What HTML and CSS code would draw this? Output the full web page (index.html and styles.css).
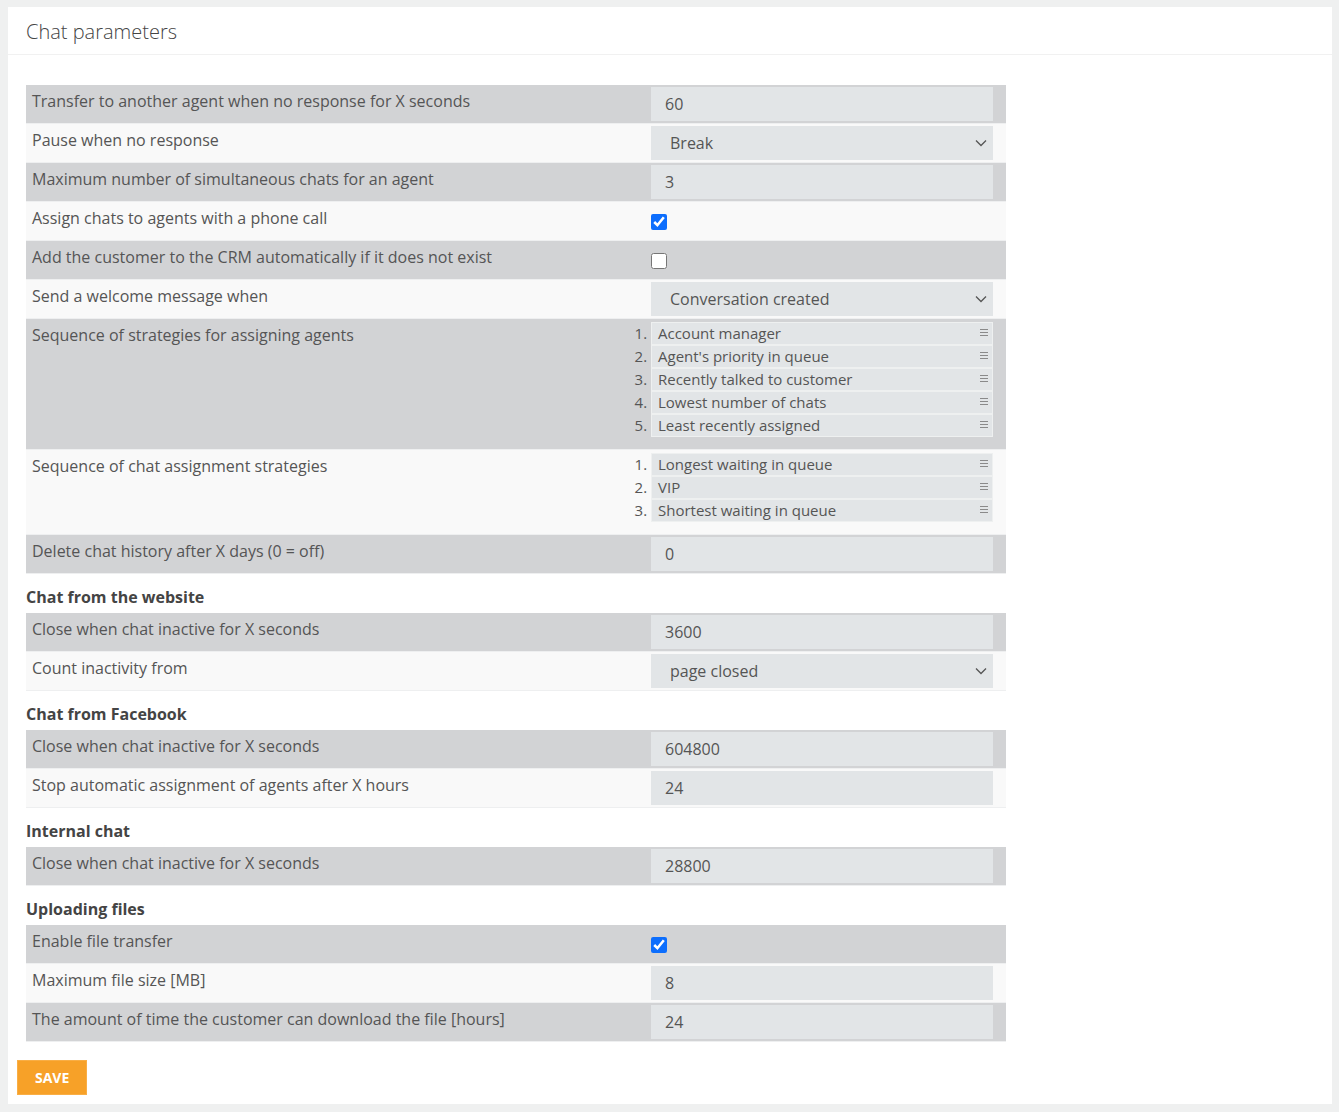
FILE: index.html
```html
<!DOCTYPE html>
<html lang="en">
<head>
    <meta charset="UTF-8">
    <meta name="viewport" content="width=device-width, initial-scale=1.0">
    <title>Chat parameters</title>
    <link rel="stylesheet" href="styles.css">
</head>
<body>
    <div class="panel">
        <div class="panel-header">Chat parameters</div>

        <div class="panel-body">
            <table class="params">
                <tr>
                    <td class="label">Transfer to another agent when no response for X seconds</td>
                    <td class="value"><input type="text" value="60"></td>
                </tr>
                <tr>
                    <td class="label">Pause when no response</td>
                    <td class="value">
                        <div class="select-wrap">
                            <select><option>Break</option></select>
                            <svg class="chevron" width="12" height="8" viewBox="0 0 12 8"><path d="M1 1.5l5 5 5-5" fill="none" stroke="#555" stroke-width="1.3"/></svg>
                        </div>
                    </td>
                </tr>
                <tr>
                    <td class="label">Maximum number of simultaneous chats for an agent</td>
                    <td class="value"><input type="text" value="3"></td>
                </tr>
                <tr>
                    <td class="label">Assign chats to agents with a phone call</td>
                    <td class="value"><input type="checkbox" checked></td>
                </tr>
                <tr>
                    <td class="label">Add the customer to the CRM automatically if it does not exist</td>
                    <td class="value"><input type="checkbox"></td>
                </tr>
                <tr>
                    <td class="label">Send a welcome message when</td>
                    <td class="value">
                        <div class="select-wrap">
                            <select><option>Conversation created</option></select>
                            <svg class="chevron" width="12" height="8" viewBox="0 0 12 8"><path d="M1 1.5l5 5 5-5" fill="none" stroke="#555" stroke-width="1.3"/></svg>
                        </div>
                    </td>
                </tr>
                <tr>
                    <td class="label">Sequence of strategies for assigning agents</td>
                    <td class="value">
                        <ol class="sortable">
                            <li>Account manager<svg class="handle" width="8" height="7" viewBox="0 0 8 7"><path d="M0 .5h8M0 3.5h8M0 6.5h8" stroke="#8a8a8a" stroke-width="1"/></svg></li>
                            <li>Agent's priority in queue<svg class="handle" width="8" height="7" viewBox="0 0 8 7"><path d="M0 .5h8M0 3.5h8M0 6.5h8" stroke="#8a8a8a" stroke-width="1"/></svg></li>
                            <li>Recently talked to customer<svg class="handle" width="8" height="7" viewBox="0 0 8 7"><path d="M0 .5h8M0 3.5h8M0 6.5h8" stroke="#8a8a8a" stroke-width="1"/></svg></li>
                            <li>Lowest number of chats<svg class="handle" width="8" height="7" viewBox="0 0 8 7"><path d="M0 .5h8M0 3.5h8M0 6.5h8" stroke="#8a8a8a" stroke-width="1"/></svg></li>
                            <li>Least recently assigned<svg class="handle" width="8" height="7" viewBox="0 0 8 7"><path d="M0 .5h8M0 3.5h8M0 6.5h8" stroke="#8a8a8a" stroke-width="1"/></svg></li>
                        </ol>
                    </td>
                </tr>
                <tr>
                    <td class="label">Sequence of chat assignment strategies</td>
                    <td class="value">
                        <ol class="sortable">
                            <li>Longest waiting in queue<svg class="handle" width="8" height="7" viewBox="0 0 8 7"><path d="M0 .5h8M0 3.5h8M0 6.5h8" stroke="#8a8a8a" stroke-width="1"/></svg></li>
                            <li>VIP<svg class="handle" width="8" height="7" viewBox="0 0 8 7"><path d="M0 .5h8M0 3.5h8M0 6.5h8" stroke="#8a8a8a" stroke-width="1"/></svg></li>
                            <li>Shortest waiting in queue<svg class="handle" width="8" height="7" viewBox="0 0 8 7"><path d="M0 .5h8M0 3.5h8M0 6.5h8" stroke="#8a8a8a" stroke-width="1"/></svg></li>
                        </ol>
                    </td>
                </tr>
                <tr>
                    <td class="label">Delete chat history after X days (0 = off)</td>
                    <td class="value"><input type="text" value="0"></td>
                </tr>
            </table>

            <h3>Chat from the website</h3>
            <table class="params">
                <tr>
                    <td class="label">Close when chat inactive for X seconds</td>
                    <td class="value"><input type="text" value="3600"></td>
                </tr>
                <tr>
                    <td class="label">Count inactivity from</td>
                    <td class="value">
                        <div class="select-wrap">
                            <select><option>page closed</option></select>
                            <svg class="chevron" width="12" height="8" viewBox="0 0 12 8"><path d="M1 1.5l5 5 5-5" fill="none" stroke="#555" stroke-width="1.3"/></svg>
                        </div>
                    </td>
                </tr>
            </table>

            <h3>Chat from Facebook</h3>
            <table class="params">
                <tr>
                    <td class="label">Close when chat inactive for X seconds</td>
                    <td class="value"><input type="text" value="604800"></td>
                </tr>
                <tr>
                    <td class="label">Stop automatic assignment of agents after X hours</td>
                    <td class="value"><input type="text" value="24"></td>
                </tr>
            </table>

            <h3>Internal chat</h3>
            <table class="params">
                <tr>
                    <td class="label">Close when chat inactive for X seconds</td>
                    <td class="value"><input type="text" value="28800"></td>
                </tr>
            </table>

            <h3>Uploading files</h3>
            <table class="params">
                <tr>
                    <td class="label">Enable file transfer</td>
                    <td class="value"><input type="checkbox" checked></td>
                </tr>
                <tr>
                    <td class="label">Maximum file size [MB]</td>
                    <td class="value"><input type="text" value="8"></td>
                </tr>
                <tr>
                    <td class="label">The amount of time the customer can download the file [hours]</td>
                    <td class="value"><input type="text" value="24"></td>
                </tr>
            </table>
        </div>

        <div class="panel-footer">
            <button class="btn-save">Save</button>
        </div>
    </div>
</body>
</html>
```

FILE: styles.css
```css
* {
    box-sizing: border-box;
}

body {
    margin: 0;
    padding: 7px 7px 7px 8px;
    background: #eff0f0;
    font-family: "Open Sans", Arial, sans-serif;
    color: #555;
}

.panel {
    background: #fff;
}

.panel-header {
    height: 48px;
    padding: 12px 18px 0;
    border-bottom: 1px solid #f1f1f1;
    font-size: 20px;
    font-weight: 300;
    line-height: 26px;
    color: #444;
}

.panel-body {
    padding: 30px 18px 0;
}

.params {
    width: 980px;
    table-layout: fixed;
    border-collapse: separate;
    border-spacing: 0;
}

.params tr {
    height: 39px;
}

.params tr:nth-child(odd) {
    background: #d2d3d5;
}

.params tr:nth-child(even) {
    background: #f9f9f9;
}

.params td {
    border-bottom: 1px solid #eeeff0;
    vertical-align: top;
}

.params td.label {
    width: 619px;
    padding: 5px 6px;
    font-size: 16px;
    line-height: 22px;
}

.params td.value {
    padding: 2px 13px 2px 6px;
}

.params input[type="text"],
.params select {
    display: block;
    width: 100%;
    height: 34px;
    border: none;
    border-radius: 0;
    background: #e2e5e7;
    font-family: inherit;
    font-size: 16px;
    color: #555;
    outline: none;
}

.params input[type="text"] {
    padding: 0 14px;
}

.params select {
    padding: 0 30px 0 19px;
    appearance: none;
    -webkit-appearance: none;
}

.select-wrap {
    position: relative;
}

.select-wrap .chevron {
    position: absolute;
    right: 6px;
    top: 13px;
    pointer-events: none;
}

.params input[type="checkbox"] {
    display: block;
    width: 16px;
    height: 16px;
    margin: 10px 0 0;
    accent-color: #0d6efd;
}

.sortable {
    margin: 1px 0 10px;
    padding: 0;
    font-size: 15px;
    color: #555;
}

.sortable li {
    position: relative;
    height: 23px;
    padding: 0 6px;
    border: 1px solid #eef0f0;
    background: #e2e5e7;
    line-height: 21px;
}

.sortable .handle {
    position: absolute;
    right: 4px;
    top: 6px;
}

.panel-body h3 {
    margin: 0;
    padding: 12px 0 5px;
    font-size: 16px;
    font-weight: 700;
    line-height: 22px;
    color: #444;
}

.panel-footer {
    padding: 18px 9px 9px;
}

.btn-save {
    display: block;
    height: 35px;
    padding: 0 17px;
    border: 1px solid #f9ae45;
    background: #f7a128;
    color: #fff;
    font-family: inherit;
    font-size: 14px;
    font-weight: 700;
    text-transform: uppercase;
    cursor: pointer;
}
```
